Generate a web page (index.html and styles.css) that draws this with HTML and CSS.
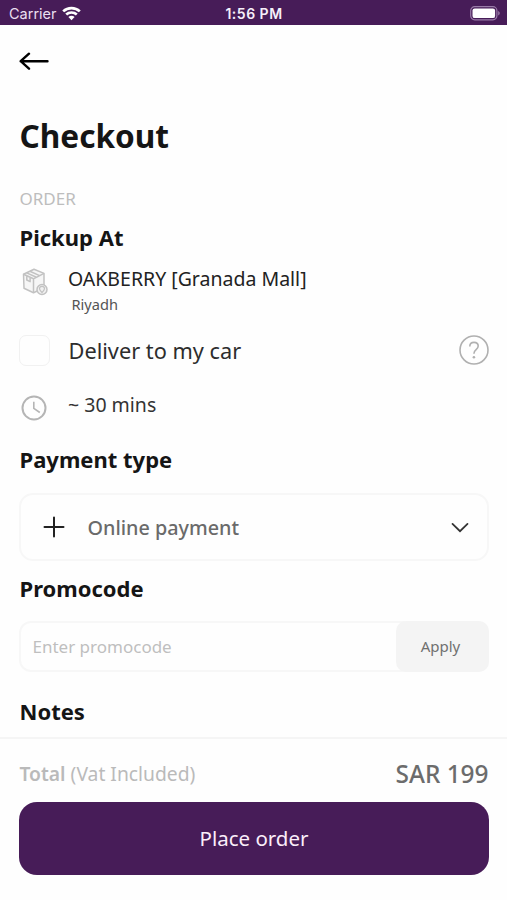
FILE: index.html
```html
<!DOCTYPE html>
<html lang="en">
<head>
<meta charset="utf-8">
<title>Checkout</title>
<link rel="stylesheet" href="styles.css">
</head>
<body>
<div class="screen">
  <div class="status">
    <div class="carrier"><span>Carrier</span>
      <svg width="19" height="15" viewBox="0 0 19 15" fill="none" stroke="#fff" stroke-width="2.7"><path d="M1.2 5.4C5.8.9 13.2.9 17.8 5.4"/><path d="M4.2 8.6c3-2.8 7.6-2.8 10.6 0"/><path d="M6.4 11.100c1.800-1.700 4.400-1.700 6.200 0L9.500 14.200z" fill="#fff" stroke="none"/></svg>
    </div>
    <div class="clock">1:56 PM</div>
    <svg class="battery" width="31" height="15" viewBox="0 0 31 15"><rect x=".7" y=".7" width="26.2" height="13.1" rx="4" fill="none" stroke="#9a7ba8" stroke-width="1.2"/><rect x="2.5" y="2.4" width="22.6" height="9.7" rx="2.2" fill="#fff"/><path d="M28.2 5v4.5c2-.8 2-3.7 0-4.5z" fill="#9a7ba8"/></svg>
  </div>
  <main class="content">
    <div class="nav"><svg width="30" height="18" viewBox="0 0 30 18" fill="none" stroke="#000" stroke-width="2.4" stroke-linecap="round" stroke-linejoin="round"><path d="M28.500 9.200H1.700M10 1.700L1.700 9.200l8.300 7.500"/></svg></div>
    <h1>Checkout</h1>
    <div class="eyebrow">ORDER</div>
    <h2 class="pickup">Pickup At</h2>
    <div class="row location">
      <svg class="box" width="26" height="28" viewBox="0 0 26 28" fill="none" stroke="#c2c2c2" stroke-width="1.5" stroke-linejoin="round"><path d="M1.500 6.200L12 1.200l10 4.200v14.400l-10.500 5L2 20.200z" fill="#f6f6f6"/><path d="M1.500 6.200l10 4.600L22 5.400M11.500 10.800v14M4.700 4.900l9.700 4.300M7.900 3.300l9.700 4.300M4.800 8v4l3.300 1.600v-4"/><circle cx="20" cy="21.500" r="5" fill="#f1f1f1"/><path d="M20 24.700c-1.800-2-2.500-2.800-2.500-3.900a2.500 2.500 0 0 1 5 0c0 1.100-.7 1.900-2.500 3.900z" stroke-width="1.200"/></svg>
      <div><div class="place">OAKBERRY [Granada Mall]</div><div class="city">Riyadh</div></div>
    </div>
    <div class="row deliver"><span class="check"></span><span class="label">Deliver to my car</span>
      <svg class="help" width="30" height="30" viewBox="0 0 30 30" fill="none" stroke="#b0b0b0" stroke-width="1.6"><circle cx="15" cy="15" r="14"/><path d="M10.800 11.400c0-2.400 1.700-4 4.200-4s4.200 1.500 4.200 3.700c0 3.500-4.200 3.600-4.200 7.200v.5"/><circle cx="14.900" cy="22.300" r="1.300" fill="#b0b0b0" stroke="none"/></svg>
    </div>
    <div class="row time"><svg class="timer" width="26" height="26" viewBox="0 0 26 26" fill="none" stroke="#b5b5b5" stroke-width="2"><circle cx="13" cy="13" r="11.500"/><path d="M12.800 6.700v6.600l6 4.200" stroke-width="1.600"/></svg><span>~ 30 mins</span></div>
    <h2 class="payment">Payment type</h2>
    <div class="select">
      <svg width="22" height="22" viewBox="0 0 22 22" stroke="#222" stroke-width="2" stroke-linecap="round"><path d="M11 1.500v19M1.500 11h19"/></svg>
      <span>Online payment</span>
      <svg width="18" height="11" viewBox="0 0 18 11" fill="none" stroke="#333" stroke-width="1.800" stroke-linecap="round"><path d="M1.500 1.900L9 9.200l7.500-7.300"/></svg>
    </div>
    <h2 class="promo">Promocode</h2>
    <div class="field"><span>Enter promocode</span><div class="apply">Apply</div></div>
    <h2 class="notes">Notes</h2>
  </main>
  <footer>
    <div class="total"><span class="sum"><b>Total</b> (Vat Included)</span><span class="amount">SAR 199</span></div>
    <div class="order">Place order</div>
  </footer>
</div>
</body>
</html>
```
FILE: styles.css
```css
* { box-sizing: border-box; }
body { margin: 0; background: #fefefe; font-family: "Noto Sans", sans-serif; color: #151515; }
svg { display: block; flex: none; }
.screen { width: 507px; height: 900px; display: flex; flex-direction: column; overflow: hidden; white-space: nowrap; }
.status { height: 25px; flex: none; background: #471c58; color: #fff; display: grid; grid-template-columns: 1fr auto 1fr; align-items: center; padding: 2px 6px 0 9px; font: 15px/20px Inter, sans-serif; }
.carrier { display: flex; align-items: center; gap: 5px; color: #eadff0; font-size: 14.5px; }
.clock { font-weight: 600; font-size: 14px; letter-spacing: 0.5px; color: #f6effa; margin-right: 2px; }
.battery { justify-self: end; }
.content { height: 712px; flex: none; padding: 0 18px 0 19px; overflow: hidden; }
.nav { height: 72px; display: flex; align-items: center; }
h1, h2 { margin: 0; padding-left: 0.5px; font-weight: 700; }
h1 { font-size: 31.6px; line-height: 77px; }
h2 { font-size: 22px; }
.eyebrow { margin-top: 11px; padding-left: 0.5px; font-size: 17px; line-height: 28px; color: #bdbdbd; }
.pickup { line-height: 48px; }
.row { display: flex; align-items: center; }
.location { height: 60px; align-items: flex-start; padding-top: 4px; }
.box { margin: 3px 20.5px 0 2.5px; }
.place { font-size: 19.5px; line-height: 28px; color: #222; }
.city { font-size: 14.6px; line-height: 23px; padding-left: 3.5px; color: #555; }
.deliver { height: 58px; font-size: 21.75px; color: #2d2d2d; }
.check { width: 31px; height: 31px; border: 1px solid #f1f1f1; border-radius: 7px; }
.label { margin-left: 18.5px; flex: 1; }
.time { height: 50px; font-size: 19.5px; color: #333; }
.timer { margin: 8px 21px 0 2px; }
.payment { line-height: 61px; }
.select { height: 68px; margin-top: 3px; border: 2px solid #f7f7f7; border-radius: 14px; display: flex; align-items: center; padding: 0 18px 0 22px; font-size: 19.8px; font-weight: 500; color: #6a6a6a; }
.select span { flex: 1; margin-left: 22.5px; }
.promo { line-height: 54px; }
.field { height: 51px; margin-top: 6px; border: 2px solid #f7f7f7; border-radius: 12px; display: flex; align-items: center; justify-content: space-between; padding-left: 11.5px; font-size: 17px; color: #bfbfbf; }
.apply { width: 93px; height: 51px; margin-right: -2px; border-radius: 10px; background: #f4f4f4; color: #707070; font-size: 15px; line-height: 51px; text-align: center; padding-right: 4px; }
.notes { line-height: 79px; }
footer { flex: 1; border-top: 2px solid #f5f5f5; padding: 0 18px 0 19px; }
.total { height: 63px; display: flex; justify-content: space-between; align-items: center; padding: 5px 0.5px 0 0.5px; }
.sum { font-size: 19.3px; color: #bababa; }
.sum b { font-weight: 600; }
.amount { font-size: 24.4px; font-weight: 500; color: #6c6c6c; }
.order { height: 73px; border-radius: 18px; background: #471c58; color: #fbeefa; font-size: 20.5px; line-height: 73px; text-align: center; }
```
